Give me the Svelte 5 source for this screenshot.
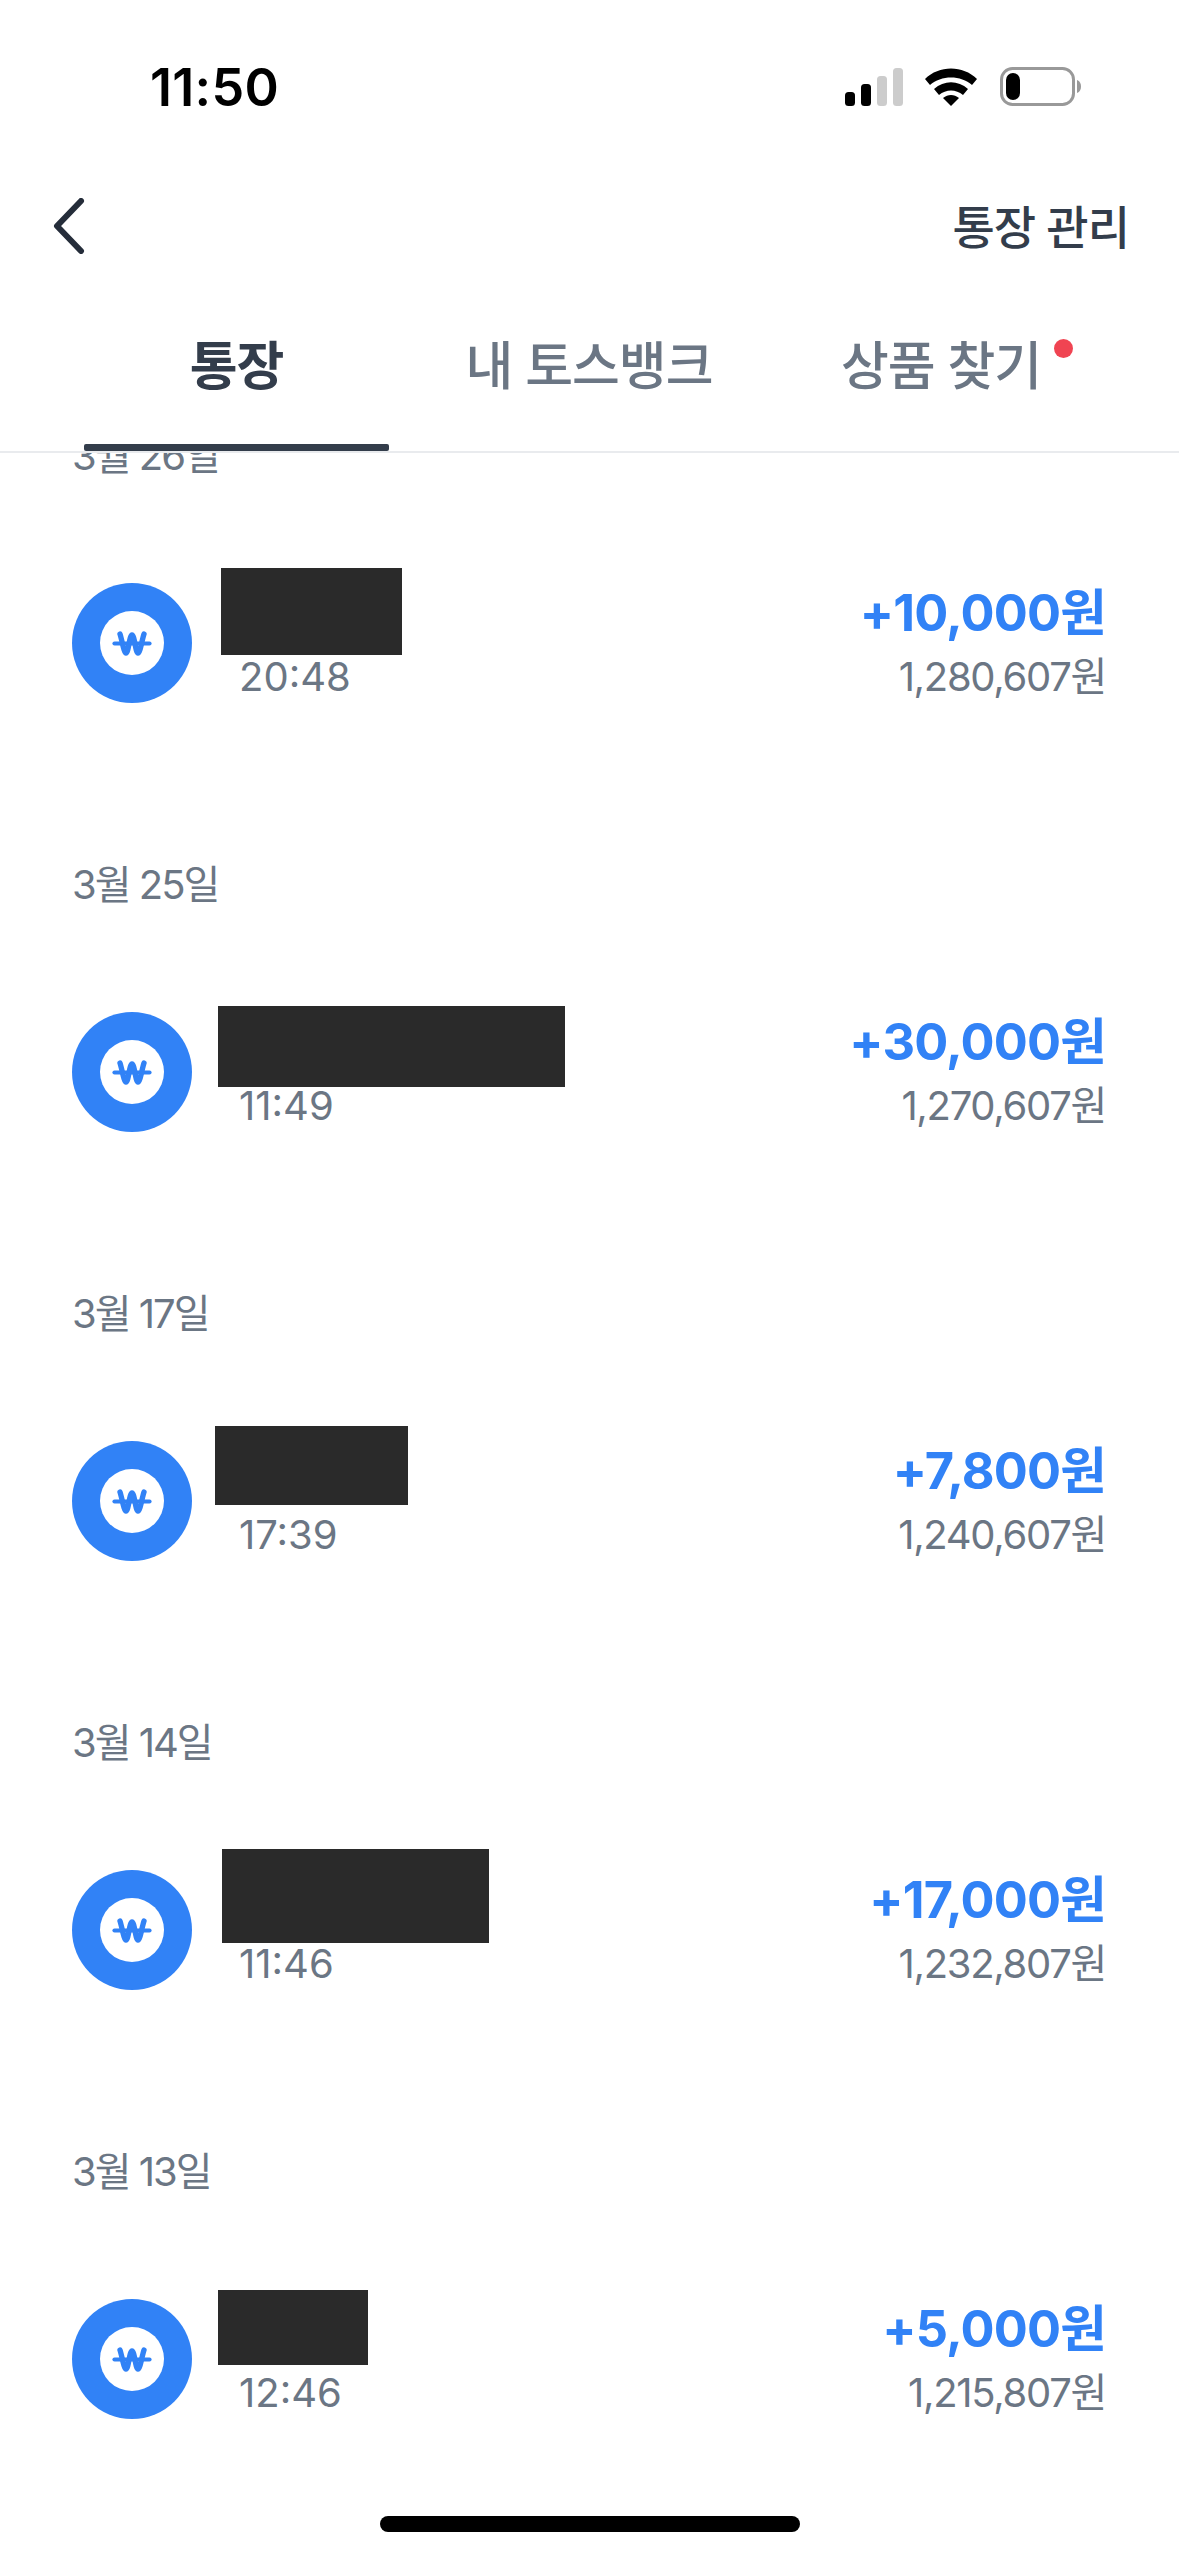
<script lang="ts">
  // Toss bank account view: status bar, header, tabs, then deposit history.
  // mask = redaction box over the payer name: [width, height, left, top]
  const sections = [
    { date: '3월 25일', time: '11:49', amount: '+30,000원', balance: '1,270,607원', mask: [347, 81, -21, -8] },
    { date: '3월 17일', time: '17:39', amount: '+7,800원', balance: '1,240,607원', mask: [193, 79, -24, -17] },
    { date: '3월 14일', time: '11:46', amount: '+17,000원', balance: '1,232,807원', mask: [267, 94, -17, -23] },
    { date: '3월 13일', time: '12:46', amount: '+5,000원', balance: '1,215,807원', mask: [150, 75, -21, -11] },
  ];
  const first = { time: '20:48', amount: '+10,000원', balance: '1,280,607원', mask: [181, 87, -18, -17] };
</script>

{#snippet row(r)}
  <div class="row">
    <div class="coin">
      <div class="coin-inner">
        <svg width="40" height="25" viewBox="0 0 40 25" fill="none" stroke="#3182f6" stroke-linecap="round" stroke-linejoin="round">
          <path d="M2.5 12.5H37.5" stroke-width="4.2" />
          <path d="M8 3C10 9 12 22 14 22C16.5 22 17.5 4 20 4C22.5 4 23.5 22 26 22C28 22 30 9 32 3" stroke-width="5.4" />
        </svg>
      </div>
    </div>
    <div class="who">
      <div class="name">
        <div class="mask" style="width:{r.mask[0]}px;height:{r.mask[1]}px;left:{r.mask[2]}px;top:{r.mask[3]}px"></div>
      </div>
      <div class="time">{r.time}</div>
    </div>
    <div class="money">
      <div class="amount">{r.amount}</div>
      <div class="balance">{r.balance}</div>
    </div>
  </div>
{/snippet}

<div class="screen">
  <header>
    <div class="status">
      <span class="clock">11:50</span>
      <div class="status-icons">
        <svg width="60" height="38" viewBox="0 0 60 38">
          <rect x="0" y="24" width="10" height="14" rx="3.5" fill="#000" />
          <rect x="16" y="16" width="10" height="22" rx="3.5" fill="#000" />
          <rect x="32" y="8" width="10" height="30" rx="3.5" fill="#ccc" />
          <rect x="48" y="0" width="10" height="38" rx="3.5" fill="#ccc" />
        </svg>
        <svg width="52" height="38" viewBox="0 0 52 38">
          <path d="M0 11C14-3 38-3 52 11L47 17C36 7 16 7 5 17Z" fill="#000" />
          <path d="M9 21C19 12 33 12 43 21L38 27C31 21 21 21 14 27Z" fill="#000" />
          <path d="M18 30C23 26 29 26 34 30L26 38Z" fill="#000" />
        </svg>
        <svg class="battery" width="82" height="40" viewBox="0 0 82 40">
          <rect x="1.5" y="1.5" width="72" height="36" rx="11" fill="#fff" stroke="#999" stroke-width="3" />
          <rect x="6" y="6" width="14" height="27" rx="7" fill="#000" />
          <path d="M77 13C80 14 81 17 81 19.5C81 22 80 25 77 26Z" fill="#999" />
        </svg>
      </div>
    </div>
    <div class="topbar">
      <svg class="back" width="34" height="56" viewBox="0 0 34 56" fill="none" stroke="#252d3a" stroke-width="6" stroke-linecap="round" stroke-linejoin="round">
        <path d="M29 3L5 28L29 53" />
      </svg>
      <span class="manage">통장 관리</span>
    </div>
    <nav class="tabs">
      <div class="tab active">통장</div>
      <div class="tab">내 토스뱅크</div>
      <div class="tab"><span class="label">상품 찾기<span class="dot"></span></span></div>
    </nav>
  </header>

  <main>
    <div class="date first-date">3월 26일</div>
    {@render row(first)}
    {#each sections as s}
      <div class="date">{s.date}</div>
      {@render row(s)}
    {/each}
  </main>

  <div class="home"></div>
</div>

<style>
  :global(body) {
    margin: 0;
    background: #fff;
  }
  .screen {
    position: relative;
    width: 1179px;
    height: 2556px;
    overflow: hidden;
    background: #fff;
    font-family: 'Inter', 'Noto Sans CJK KR', sans-serif;
    color: #6b7684;
  }
  header {
    position: relative;
    z-index: 2;
    height: 451px;
    background: #fff;
    border-bottom: 2px solid #e9ebee;
  }
  .status {
    display: flex;
    justify-content: space-between;
    align-items: center;
    height: 38px;
    padding: 68px 97px 0 150px;
  }
  .clock {
    font-family: 'Inter', sans-serif;
    font-size: 52px;
    font-weight: 600;
    color: #000;
    letter-spacing: 0.3px;
  }
  .status-icons {
    display: flex;
    align-items: center;
    gap: 20px;
  }
  .battery {
    margin-left: 3px;
  }
  .topbar {
    display: flex;
    justify-content: space-between;
    align-items: center;
    height: 64px;
    margin-top: 86px;
    padding: 0 50px 0 52px;
  }
  .back {
    margin-top: 3px;
  }
  .manage {
    font-size: 46px;
    font-weight: 500;
    color: #333d4b;
    letter-spacing: -1px;
  }
  .tabs {
    display: grid;
    grid-template-columns: 305px 400px 304px;
    padding: 0 84px;
    margin-top: 75px;
  }
  .tab {
    position: relative;
    height: 114px;
    display: flex;
    justify-content: center;
    font-size: 52px;
    font-weight: 500;
    color: #6b7684;
    letter-spacing: -1px;
    line-height: 72px;
  }
  .tab.active {
    font-weight: 700;
    color: #333d4b;
  }
  .tab.active::after {
    content: '';
    position: absolute;
    left: 0;
    right: 0;
    bottom: -6px;
    height: 7px;
    border-radius: 2px;
    background: #333d4b;
  }
  .label {
    position: relative;
  }
  .dot {
    position: absolute;
    top: 8px;
    left: calc(100% + 13px);
    width: 19px;
    height: 19px;
    border-radius: 50%;
    background: #f04452;
  }
  main {
    position: relative;
    z-index: 1;
    padding: 0 72px;
  }
  .date {
    font-size: 40px;
    line-height: 56px;
    height: 56px;
    letter-spacing: -2px;
  }
  .first-date {
    margin-top: -25px;
  }
  .row {
    display: flex;
    align-items: center;
    box-sizing: border-box;
    height: 373px;
    padding-bottom: 55px;
  }
  .coin {
    flex: none;
    width: 120px;
    height: 120px;
    border-radius: 50%;
    background: #3182f6;
    display: flex;
    align-items: center;
    justify-content: center;
  }
  .coin-inner {
    width: 64px;
    height: 64px;
    border-radius: 50%;
    background: #fff;
    display: flex;
    align-items: center;
    justify-content: center;
  }
  .who {
    flex: 1;
    padding-left: 47px;
  }
  .name {
    position: relative;
    height: 68px;
  }
  .mask {
    position: absolute;
    background: #2a2a2a;
  }
  .time {
    font-size: 40px;
    line-height: 48px;
  }
  .money {
    text-align: right;
    padding-right: 1px;
  }
  .amount {
    font-size: 50.5px;
    font-weight: 700;
    line-height: 56px;
    margin-bottom: 12px;
    color: #3182f6;
    letter-spacing: -0.8px;
  }
  .balance {
    font-size: 40px;
    line-height: 48px;
    letter-spacing: -1.3px;
  }
  .home {
    position: absolute;
    left: 380px;
    bottom: 24px;
    width: 420px;
    height: 16px;
    border-radius: 8px;
    background: #000;
  }
</style>
